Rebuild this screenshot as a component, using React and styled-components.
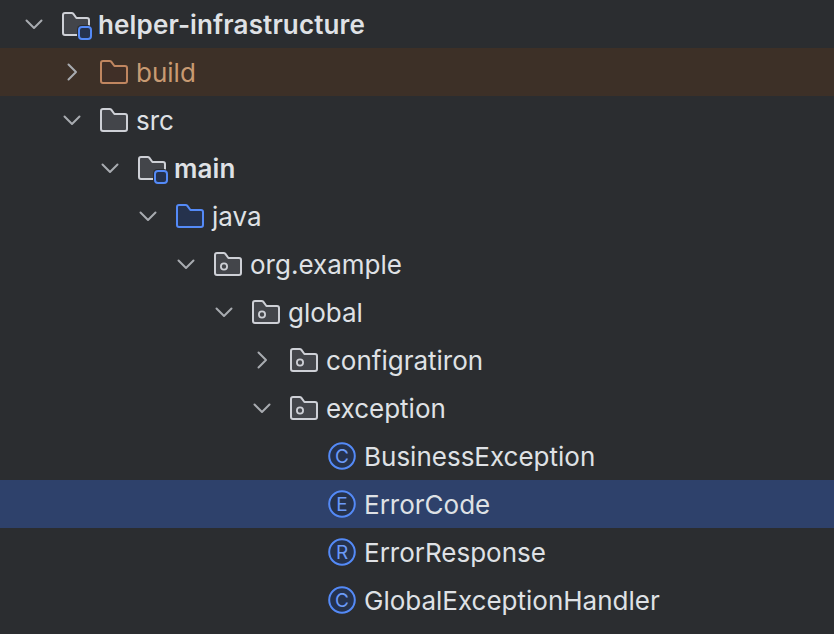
import React from 'react'
import styled, { createGlobalStyle } from 'styled-components'

const GlobalStyle = createGlobalStyle`
    html, body {
        margin: 0;
        padding: 0;
        background: #2b2d30;
    }
`;

const Tree = styled.div`
    width: 834px;
    height: 634px;
    overflow: hidden;
    background: #2b2d30;
    font-family: Inter, "Liberation Sans", sans-serif;
`;

const Row = styled.div`
    display: flex;
    align-items: center;
    height: 48px;
    padding-left: ${p => 22 + p.$depth * 38}px;
    background: ${p => p.$tone === 'excluded' ? '#3d3027' : p.$tone === 'selected' ? '#2e416b' : 'transparent'};
`;

const ChevronSlot = styled.span`
    display: flex;
    align-items: center;
    justify-content: center;
    width: 24px;
    height: 24px;
    margin-right: 16px;
`;

const IconSlot = styled.span`
    display: flex;
    flex: none;
    width: 30px;
    height: 28px;
    margin-right: 6px;

    svg {
        overflow: visible;
    }
`;

const Label = styled.span`
    padding-top: 2px;
    font-size: 26px;
    line-height: 48px;
    letter-spacing: ${p => p.$bold ? '0.14px' : '0'};
    font-weight: ${p => p.$bold ? 600 : 400};
    color: ${p => p.$tone === 'excluded' ? '#c89a72' : '#dfe1e5'};
    white-space: nowrap;
`;

const Chevron = ({ open }) => (
    <svg width="24" height="24" viewBox="0 0 24 24" fill="none" stroke="#a8abb0" strokeWidth="2" strokeLinecap="round" strokeLinejoin="round">
        {open ? <path d="M4.5 8.5 12 16l7.5-7.5" /> : <path d="M8.5 4.5 16 12l-7.5 7.5" />}
    </svg>
);

const folderPalette = {
    plain: { stroke: '#ced0d6', fill: '#43454a' },
    excluded: { stroke: '#c08660', fill: '#402f27' },
    source: { stroke: '#548af7', fill: '#25324d' }
};

const FOLDER_PATH = 'M3 3h6.600c.7 0 1.300.3 1.800.8l3 4.200h10.600c1.100 0 2 .9 2 2v13c0 1.100-.9 2-2 2H3c-1.100 0-2-.9-2-2V5c0-1.100.9-2 2-2Z';

const FolderIcon = ({ kind = 'plain', dot, module }) => {
    const colors = folderPalette[kind];
    return (
        <svg width="30" height="28" viewBox="0 0 30 28">
            <path d={FOLDER_PATH} fill={colors.fill} stroke={colors.stroke} strokeWidth="2" strokeLinejoin="round" />
            {dot && <circle cx="10" cy="16.500" r="3.100" fill="none" stroke={colors.stroke} strokeWidth="1.800" />}
            {module && <rect x="15" y="15" width="15" height="15" rx="4.500" fill="#2b2d30" />}
            {module && <rect x="17" y="17" width="12" height="12" rx="3" fill="#25324d" stroke="#548af7" strokeWidth="2" />}
        </svg>
    );
};

const ClassIcon = ({ letter }) => (
    <svg width="30" height="28" viewBox="0 0 30 28">
        <circle cx="14" cy="14" r="12.800" fill="#25324d" stroke="#548af7" strokeWidth="2" />
        <text x="14" y="20.700" textAnchor="middle" fontFamily="Inter, sans-serif" fontSize="19" fill="#6b9af8">{letter}</text>
    </svg>
);

const nodes = [
    { depth: 0, open: true, folder: 'plain', module: true, bold: true, label: 'helper-infrastructure' },
    { depth: 1, open: false, folder: 'excluded', tone: 'excluded', label: 'build' },
    { depth: 1, open: true, folder: 'plain', label: 'src' },
    { depth: 2, open: true, folder: 'plain', module: true, bold: true, label: 'main' },
    { depth: 3, open: true, folder: 'source', label: 'java' },
    { depth: 4, open: true, folder: 'plain', dot: true, label: 'org.example' },
    { depth: 5, open: true, folder: 'plain', dot: true, label: 'global' },
    { depth: 6, open: false, folder: 'plain', dot: true, label: 'configratiron' },
    { depth: 6, open: true, folder: 'plain', dot: true, label: 'exception' },
    { depth: 7, letter: 'C', label: 'BusinessException' },
    { depth: 7, letter: 'E', tone: 'selected', label: 'ErrorCode' },
    { depth: 7, letter: 'R', label: 'ErrorResponse' },
    { depth: 7, letter: 'C', label: 'GlobalExceptionHandler' }
];

const App = () => (
    <Tree>
        <GlobalStyle />
        {nodes.map(node => (
            <Row key={node.label} $depth={node.depth} $tone={node.tone}>
                <ChevronSlot>
                    {node.open !== undefined && <Chevron open={node.open} />}
                </ChevronSlot>
                <IconSlot>
                    {node.letter
                        ? <ClassIcon letter={node.letter} />
                        : <FolderIcon kind={node.folder} dot={node.dot} module={node.module} />}
                </IconSlot>
                <Label $bold={node.bold} $tone={node.tone}>{node.label}</Label>
            </Row>
        ))}
    </Tree>
)

export default App
